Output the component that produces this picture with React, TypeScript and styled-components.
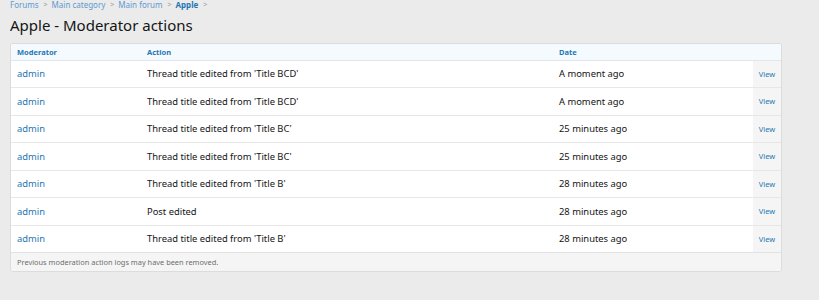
import { createGlobalStyle } from 'styled-components';
import styled from 'styled-components';

const GlobalStyle = createGlobalStyle`
  html, body {
    margin: 0;
    padding: 0;
    background: #ebebeb;
    font-family: 'Noto Sans', 'Open Sans', sans-serif;
    color: #141414;
  }
`;

const ROWS = [
  { user: 'admin', action: "Thread title edited from 'Title BCD'", date: 'A moment ago' },
  { user: 'admin', action: "Thread title edited from 'Title BCD'", date: 'A moment ago' },
  { user: 'admin', action: "Thread title edited from 'Title BC'", date: '25 minutes ago' },
  { user: 'admin', action: "Thread title edited from 'Title BC'", date: '25 minutes ago' },
  { user: 'admin', action: "Thread title edited from 'Title B'", date: '28 minutes ago' },
  { user: 'admin', action: 'Post edited', date: '28 minutes ago' },
  { user: 'admin', action: "Thread title edited from 'Title B'", date: '28 minutes ago' },
];

const Page = styled.div`
  width: 819px;
  height: 300px;
  padding: 0 37px 0 10px;
  box-sizing: border-box;
  overflow: hidden;
`;

const Breadcrumbs = styled.ul`
  display: flex;
  gap: 4px;
  margin: -1px 0 0;
  padding: 0;
  list-style: none;
  font-size: 8px;
  line-height: 11px;
  color: #5c9ad0;
`;

const Crumb = styled.li<{ $current?: boolean }>`
  display: flex;
  gap: 5px;
  font-weight: ${({ $current }) => ($current ? 700 : 400)};
  color: ${({ $current }) => ($current ? '#2577b1' : '#5c9ad0')};

  &::after {
    content: '>';
    color: #a0a0a0;
    font-weight: 400;
    font-size: 7px;
  }
`;

const Title = styled.h1`
  margin: 5px 0 8px;
  font-size: 15px;
  font-weight: 400;
  line-height: 20px;
  color: #141414;
`;

const Block = styled.div`
  background: #fff;
  border: 1px solid #dcdcdc;
  border-radius: 3px;
  overflow: hidden;
`;

const Table = styled.table`
  width: 100%;
  border-collapse: collapse;
  table-layout: fixed;
`;

const HeadCell = styled.th<{ $w: number }>`
  box-sizing: border-box;
  width: ${({ $w }) => `${$w}px`};
  text-align: left;
  padding: 0 6px;
  height: 16px;
  background: #f5faff;
  border-bottom: 1px solid #dfe6ee;
  font-size: 7.5px;
  font-weight: 700;
  color: #2577b1;
`;

const Row = styled.tr`
  border-bottom: 1px solid #e7e7e7;

  &:last-child {
    border-bottom: 1px solid #e2e2e2;
  }
`;

const Cell = styled.td`
  height: 26.5px;
  padding: 0 6px;
  font-size: 9.4px;
  white-space: nowrap;
`;

const UserLink = styled(Cell)`
  color: #2577b1;
`;

const ViewCell = styled.td`
  padding: 0;
  text-align: center;
  background: #f5f5f5;
  font-size: 7.5px;
  color: #2577b1;
`;

const Footer = styled.div`
  background: #f5f5f5;
  padding: 0 6px;
  height: 18px;
  line-height: 18px;
  font-size: 7.4px;
  color: #6e6e6e;
`;

export default function App() {
  return (
    <Page>
      <GlobalStyle />
      <Breadcrumbs>
        <Crumb>Forums</Crumb>
        <Crumb>Main category</Crumb>
        <Crumb>Main forum</Crumb>
        <Crumb $current>Apple</Crumb>
      </Breadcrumbs>
      <Title>Apple - Moderator actions</Title>
      <Block>
        <Table>
          <thead>
            <tr>
              <HeadCell $w={130}>Moderator</HeadCell>
              <HeadCell $w={412}>Action</HeadCell>
              <HeadCell $w={200}>Date</HeadCell>
              <HeadCell $w={28} />
            </tr>
          </thead>
          <tbody>
            {ROWS.map((r, i) => (
              <Row key={i}>
                <UserLink>{r.user}</UserLink>
                <Cell>{r.action}</Cell>
                <Cell>{r.date}</Cell>
                <ViewCell>View</ViewCell>
              </Row>
            ))}
          </tbody>
        </Table>
        <Footer>Previous moderation action logs may have been removed.</Footer>
      </Block>
    </Page>
  );
}
